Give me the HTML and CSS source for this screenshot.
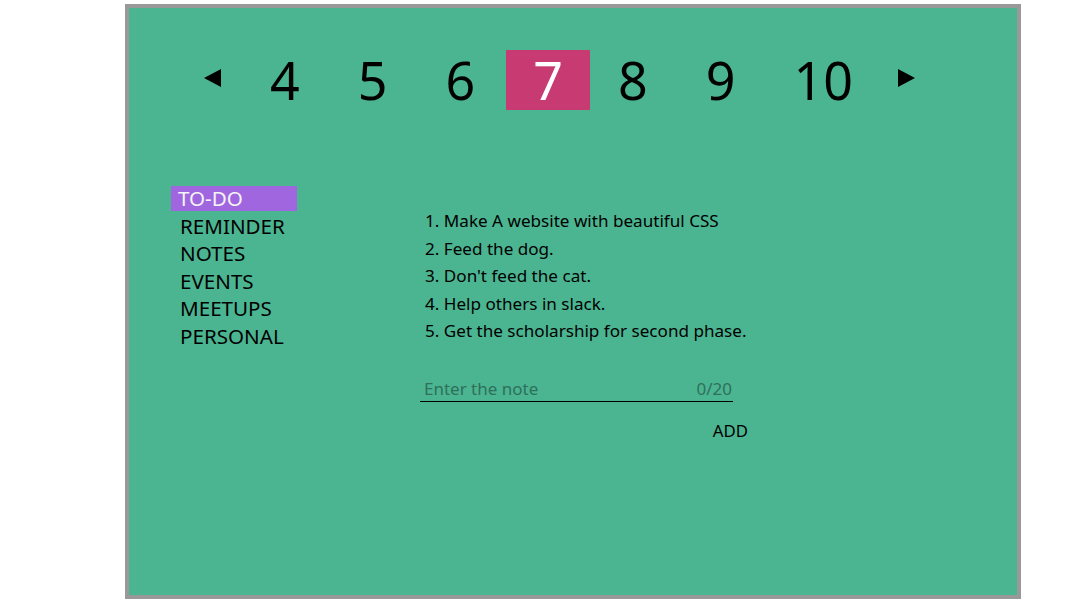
FILE: index.html
```html
<!DOCTYPE html>
<html lang="en">
<head>
<meta charset="utf-8">
<title>Todo</title>
<link rel="stylesheet" href="styles.css">
</head>
<body>
<div class="frame">
  <nav class="pager">
    <span class="arrow arrow-left"></span>
    <span class="page">4</span>
    <span class="page">5</span>
    <span class="page">6</span>
    <span class="page active">7</span>
    <span class="page">8</span>
    <span class="page">9</span>
    <span class="page">10</span>
    <span class="arrow arrow-right"></span>
  </nav>
  <div class="content">
    <ul class="menu">
      <li class="menu-item selected">TO-DO</li>
      <li class="menu-item">REMINDER</li>
      <li class="menu-item">NOTES</li>
      <li class="menu-item">EVENTS</li>
      <li class="menu-item">MEETUPS</li>
      <li class="menu-item">PERSONAL</li>
    </ul>
    <div class="main">
      <ol class="todos">
        <li>Make A website with beautiful CSS</li>
        <li>Feed the dog.</li>
        <li>Don't feed the cat.</li>
        <li>Help others in slack.</li>
        <li>Get the scholarship for second phase.</li>
      </ol>
      <div class="field">
        <span class="placeholder">Enter the note</span>
        <span class="counter">0/20</span>
      </div>
      <div class="actions"><span class="add">ADD</span></div>
    </div>
  </div>
</div>
</body>
</html>
```
FILE: styles.css
```css
html, body {
  margin: 0;
  padding: 0;
  background: #ffffff;
}
body {
  font-family: "Noto Sans", "DejaVu Sans", sans-serif;
  color: #000;
}
.frame {
  box-sizing: border-box;
  margin: 4px 0 0 125px;
  width: 896px;
  height: 595px;
  border: 4px solid #999999;
  background: #4bb592;
}
.pager {
  display: flex;
  align-items: center;
  margin-top: 42px;
  padding-left: 75px;
  height: 60px;
}
.page {
  font-size: 52px;
  line-height: 60px;
  padding: 0 27px;
  margin-right: 4px;
}
.page.active {
  background: #c73a72;
  color: #fff;
  margin-right: 1px;
}
.arrow {
  width: 0;
  height: 0;
  border-top: 9.5px solid transparent;
  border-bottom: 9.5px solid transparent;
  margin-top: -4px;
}
.arrow-left {
  border-right: 17px solid #000;
  margin-right: 22px;
}
.arrow-right {
  border-left: 17px solid #000;
  margin-left: 14px;
}
.content {
  display: flex;
  margin-top: 76px;
}
.menu {
  list-style: none;
  margin: 0 0 0 42px;
  padding: 0;
  width: 126px;
}
.menu-item {
  font-size: 20.6px;
  line-height: 25px;
  height: 25px;
  margin-bottom: 2.6px;
  padding-left: 9px;
}
.menu-item.selected {
  background: #a066e0;
  color: #f4f4f4;
  padding-left: 7px;
}
.main {
  margin-left: 123px;
  width: 330px;
}
.todos {
  list-style: decimal inside;
  margin: 21px 0 0 0;
  padding: 0 0 0 5px;
  font-size: 17.1px;
  line-height: 27.5px;
}
.field {
  display: flex;
  justify-content: space-between;
  width: 313px;
  margin-top: 33px;
  padding: 0 0 1px 4px;
  box-sizing: border-box;
  border-bottom: 1.5px solid #000;
  font-size: 17px;
  line-height: 22px;
  color: #2e705a;
}
.counter {
  padding-right: 1px;
}
.actions {
  display: flex;
  justify-content: flex-end;
  width: 328px;
  margin-top: 18px;
}
.add {
  font-size: 16.8px;
  line-height: 22px;
}
```
